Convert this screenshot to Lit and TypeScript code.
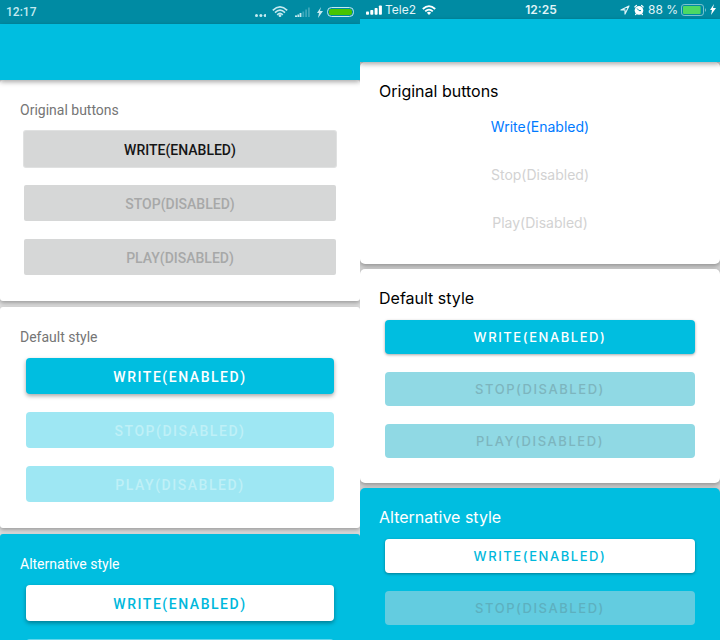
import { LitElement, html, css } from "lit";
import { customElement, property } from "lit/decorators.js";

type Look = "original" | "default" | "alternative";

interface Section {
  title: string;
  look: Look;
  actions: { label: string; enabled: boolean }[];
}

const write = { label: "Write(Enabled)", enabled: true };
const stop = { label: "Stop(Disabled)", enabled: false };
const play = { label: "Play(Disabled)", enabled: false };

const sections: Section[] = [
  { title: "Original buttons", look: "original", actions: [write, stop, play] },
  { title: "Default style", look: "default", actions: [write, stop, play] },
  { title: "Alternative style", look: "alternative", actions: [write, stop] },
];

const boltPath = "M4 0 L0 6 H2 L1 11 L6 4 H3 Z";

@customElement("android-status")
class AndroidStatus extends LitElement {
  static styles = css`
    :host {
      display: flex;
      align-items: center;
      height: 24px;
      padding: 0 6px;
      background: #008ba3;
      color: #c4eaf0;
      font: 500 12px/24px Roboto, sans-serif;
    }
    .time {
      flex: 1;
      line-height: 26px;
    }
    svg {
      display: block;
      fill: currentColor;
    }
    .dots {
      margin-right: 6px;
    }
    .wifi {
      margin-right: 7px;
    }
    .signal {
      margin-right: 7px;
    }
    .bolt {
      margin-right: 3px;
    }
  `;

  render() {
    return html`
      <span class="time">12:17</span>
      <svg class="dots" width="12" height="24" viewBox="0 0 12 24">
        <circle cx="2.5" cy="15.5" r="1.5" />
        <circle cx="6.9" cy="15.5" r="1.5" />
        <circle cx="11.2" cy="15.5" r="1.5" />
      </svg>
      <svg class="wifi" width="16" height="24" viewBox="0 0 16 24">
        <g fill="none" stroke="currentColor" stroke-width="1.6">
          <path d="M0.8 10.3 Q8 3.4 15.2 10.3" />
          <path d="M3 12.6 Q8 7.8 13 12.6" />
          <path d="M5.2 14.8 Q8 12.1 10.8 14.8" />
        </g>
        <circle cx="8" cy="15.7" r="1.4" />
      </svg>
      <svg class="signal" width="15" height="24" viewBox="0 0 15 24">
        <rect x="0" y="15.4" width="2" height="1.6" />
        <rect x="2.4" y="14.5" width="1.8" height="2.5" />
        <rect x="4.6" y="13" width="1.8" height="4" />
        <g opacity="0.3">
          <rect x="7.4" y="11.5" width="1.8" height="5.5" />
          <rect x="10.2" y="9.5" width="1.8" height="7.5" />
          <rect x="13" y="7.5" width="1.8" height="9.5" />
        </g>
      </svg>
      <svg class="bolt" width="6" height="11" viewBox="0 0 6 11">
        <path d=${boltPath} />
      </svg>
      <svg width="28" height="24" viewBox="0 0 28 24">
        <rect x="1.5" y="7.5" width="26" height="9" rx="4" fill="#008ba3" stroke="currentColor" />
        <rect x="3" y="9" width="23" height="6" rx="2.6" fill="#48c400" />
      </svg>
    `;
  }
}

@customElement("ios-status")
class IosStatus extends LitElement {
  static styles = css`
    :host {
      display: grid;
      grid-template-columns: 1fr auto 1fr;
      align-items: center;
      height: 19px;
      padding: 0 4px 0 6px;
      background: #008ba3;
      color: #e3f5f8;
      font: 400 12px/19px Inter, sans-serif;
    }
    .group {
      display: flex;
      align-items: center;
      gap: 3px;
    }
    .wifi {
      margin-left: 3px;
    }
    .end {
      justify-content: flex-end;
    }
    .time {
      font-weight: 600;
    }
    svg {
      display: block;
      fill: #fff;
    }
  `;

  render() {
    return html`
      <div class="group">
        <svg width="16" height="10" viewBox="0 0 16 10">
          <rect x="0" y="6.5" width="3" height="3.2" rx="0.8" />
          <rect x="4.3" y="5" width="3" height="4.7" rx="0.8" />
          <rect x="8.6" y="3" width="3" height="6.7" rx="0.8" />
          <rect x="12.9" y="0.5" width="3" height="9.2" rx="0.8" />
        </svg>
        <span>Tele2</span>
        <svg class="wifi" width="14" height="10" viewBox="0 0 14 10">
          <g fill="none" stroke="#fff" stroke-width="1.8">
            <path d="M0.8 4 Q7 -1.8 13.2 4" />
            <path d="M3.2 6.4 Q7 2.8 10.8 6.4" />
          </g>
          <path d="M4.9 7.8 Q7 5.9 9.1 7.8 L7 10 Z" />
        </svg>
      </div>
      <span class="time">12:25</span>
      <div class="group end">
        <svg width="10" height="10" viewBox="0 0 10 10">
          <path d="M9 1 L0.9 4.9 H5 V9.1 Z" fill="none" stroke="#e3f5f8" stroke-width="1.1" stroke-linejoin="round" />
        </svg>
        <svg width="12" height="12" viewBox="0 0 12 12">
          <circle cx="6" cy="6.4" r="4.3" />
          <path d="M1.8 2.9 L3.4 1.5 M8.6 1.5 L10.2 2.9 M3.2 9.8 L2.6 10.6 M8.8 9.8 L9.4 10.6" stroke="#fff" stroke-width="1.2" stroke-linecap="round" />
          <path d="M4.1 4.5 L6 6.6 H8" fill="none" stroke="#008ba3" />
        </svg>
        <span>88 %</span>
        <svg width="26" height="12" viewBox="0 0 26 12">
          <rect x="0.5" y="0.5" width="22" height="11" rx="2.6" fill="none" stroke="#7cc3cf" />
          <rect x="2" y="2" width="17.6" height="8" rx="1" fill="#4cd964" />
          <path d="M24 4 Q26 6 24 8 Z" fill="#7cc3cf" />
        </svg>
        <svg width="6" height="11" viewBox="0 0 6 11">
          <path d=${boltPath} />
        </svg>
      </div>
    `;
  }
}

@customElement("phone-screen")
class PhoneScreen extends LitElement {
  @property({ reflect: true }) platform: "android" | "ios" = "android";

  static styles = css`
    :host {
      flex: 1;
      min-width: 0;
      display: flex;
      flex-direction: column;
      overflow: hidden;
      background: #dedede;
      font-family: Roboto, sans-serif;
    }
    :host([platform="ios"]) {
      background: #d2d2d2;
      font-family: Inter, sans-serif;
    }
    .bar {
      position: relative;
      z-index: 1;
      flex: none;
      height: 56px;
      background: #00bee0;
      box-shadow: 0 2px 5px rgba(0, 0, 0, 0.35);
    }
    .cards {
      flex: 1;
      display: flex;
      flex-direction: column;
      gap: 6px;
    }
    .card {
      flex: none;
      box-sizing: border-box;
      padding: 20px 20px 26px;
      border-radius: 3px;
      background: #fff;
      box-shadow: 0 2px 4px rgba(0, 0, 0, 0.3);
    }
    .card:last-child {
      flex: 1 0 auto;
    }
    h2 {
      margin: 0 0 11px;
      color: #757575;
      font-size: 14px;
      font-weight: 400;
      line-height: 20px;
    }
    .actions {
      display: flex;
      flex-direction: column;
      gap: 18px;
      padding: 0 6px;
    }
    button {
      height: 36px;
      padding: 2px 0 0;
      border: 0;
      border-radius: 4px;
      font: 500 14px/20px Roboto, sans-serif;
      letter-spacing: 0.11em;
      text-transform: uppercase;
      background: #00bee0;
      color: #fff;
      box-shadow: 0 2px 4px rgba(0, 0, 0, 0.35);
    }
    button:disabled {
      background: #9ee7f3;
      color: #bff0f7;
      box-shadow: none;
    }
    .original .actions {
      padding: 0 4px;
    }
    .original button {
      border-radius: 2px;
      letter-spacing: normal;
      background: #d6d7d7;
      color: #151515;
      box-shadow: 0 0 0 1px #e0e1e1;
    }
    .original button:disabled {
      color: #a7a8a8;
      box-shadow: none;
    }
    .alternative {
      background: #00bee0;
    }
    .alternative h2 {
      color: #fff;
    }
    .alternative button {
      background: #fff;
      color: #00b8dc;
    }
    .alternative button:disabled {
      background: #62d6eb;
      color: #9ee7f3;
    }

    :host([platform="ios"]) .bar {
      height: 43px;
    }
    :host([platform="ios"]) .cards {
      gap: 5px;
    }
    :host([platform="ios"]) .card {
      padding: 18px 19px 25px;
      border-radius: 5px;
    }
    :host([platform="ios"]) h2 {
      color: #000;
      font-size: 16px;
      line-height: 22px;
    }
    :host([platform="ios"]) .alternative h2 {
      color: #fff;
    }
    :host([platform="ios"]) button {
      height: 34px;
      padding: 0;
      font: 500 13px/20px Inter, sans-serif;
      letter-spacing: 0.12em;
      box-shadow: 0 1px 3px rgba(0, 0, 0, 0.35);
    }
    :host([platform="ios"]) button:disabled {
      background: #90d9e4;
      color: #7db5be;
      box-shadow: none;
    }
    :host([platform="ios"]) .alternative button:disabled {
      background: #63cce0;
      color: #5db0bf;
    }
    :host([platform="ios"]) .original {
      padding-bottom: 17px;
    }
    :host([platform="ios"]) .original h2 {
      margin-bottom: 1px;
    }
    :host([platform="ios"]) .original .actions {
      gap: 0;
    }
    :host([platform="ios"]) .original button {
      height: 48px;
      background: none;
      color: #007aff;
      box-shadow: none;
      font-size: 14px;
      font-weight: 400;
      letter-spacing: normal;
      text-transform: none;
    }
    :host([platform="ios"]) .original button:disabled {
      color: #d2d2d2;
    }
  `;

  render() {
    return html`
      ${this.platform === "ios"
        ? html`<ios-status></ios-status>`
        : html`<android-status></android-status>`}
      <header class="bar"></header>
      <main class="cards">
        ${sections.map(
          (s) => html`
            <section class="card ${s.look}">
              <h2>${s.title}</h2>
              <div class="actions">
                ${s.actions.map(
                  (a) => html`<button type="button" ?disabled=${!a.enabled}>${a.label}</button>`
                )}
              </div>
            </section>
          `
        )}
      </main>
    `;
  }
}

@customElement("app-root")
class AppRoot extends LitElement {
  static styles = css`
    :host {
      display: flex;
      height: 100vh;
      overflow: hidden;
    }
  `;

  render() {
    return html`
      <phone-screen platform="android"></phone-screen>
      <phone-screen platform="ios"></phone-screen>
    `;
  }
}
